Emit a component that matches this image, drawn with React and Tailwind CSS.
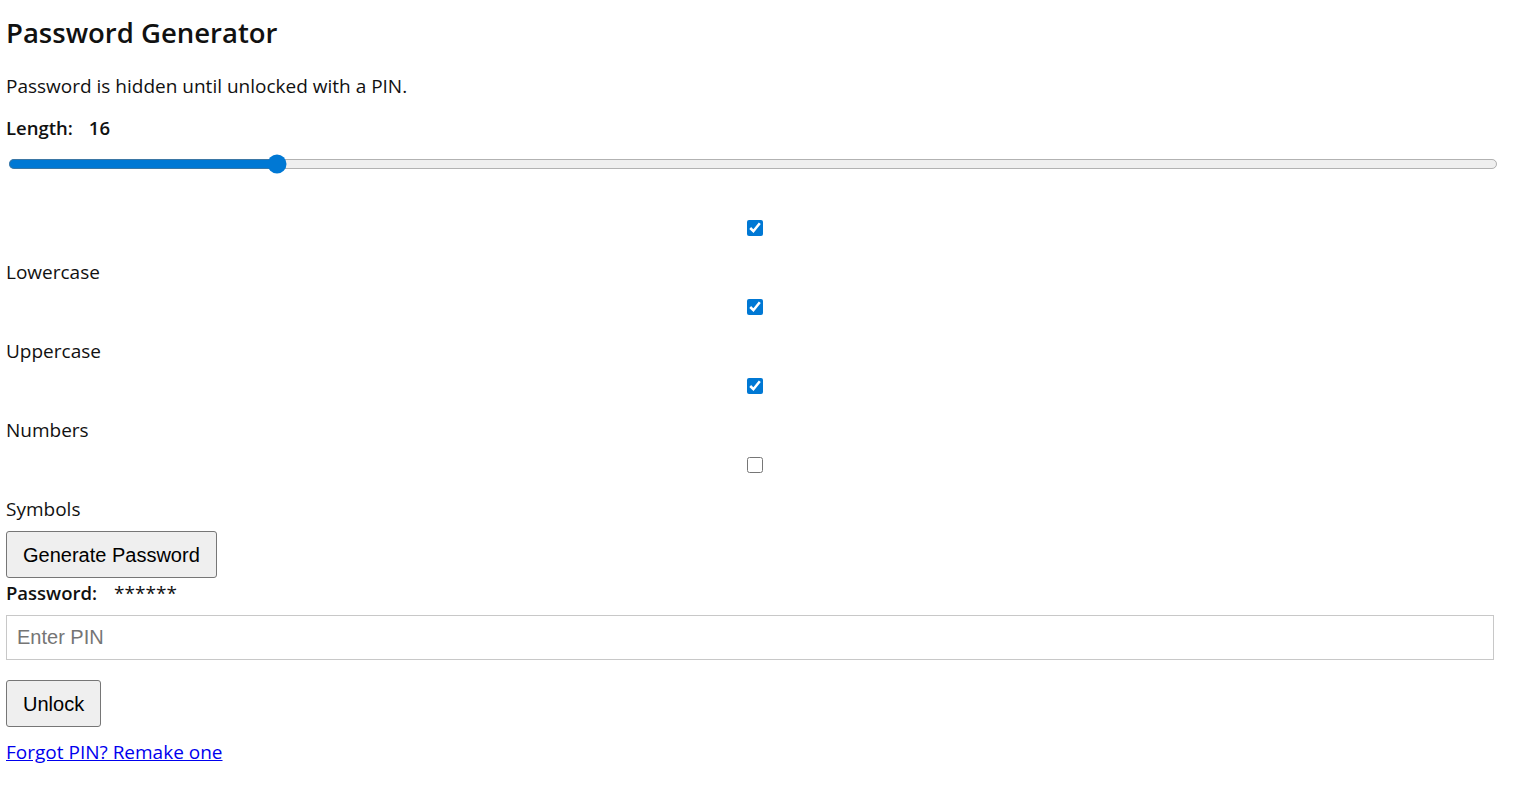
import { useState } from "react";

export default function App() {
    const [length, setLength] = useState(16);
    const [opts, setOpts] = useState({ Lowercase: true, Uppercase: true, Numbers: true, Symbols: false });
    const [pin, setPin] = useState("");

    const toggle = (k) => setOpts(prev => ({ ...prev, [k]: !prev[k] }));

    return (
        <div className="px-[6px] text-[19px] text-[#111] bg-white min-h-screen" style={{ fontFamily: '"Open Sans", sans-serif' }}>
            <h1 className="pt-[14px] text-[27.5px] leading-[38px] font-semibold">Password Generator</h1>
            <p className="mt-[22px] leading-[24px]">Password is hidden until unlocked with a PIN.</p>
            <div className="mt-[18px] leading-[24px] font-semibold text-[18.5px]">
                <span>Length:</span>
                <span className="ml-[16px]">{length}</span>
            </div>
            {/* slider drawn at 125% like the original */}
            <div className="mt-[14px] h-[20px] pl-[2px]">
                <input
                    type="range"
                    min="4"
                    max="72"
                    value={length}
                    onChange={e => setLength(Number(e.target.value))}
                    className="block w-[1192px] h-4 m-0 accent-[#0078d4] [zoom:1.25]"
                />
            </div>
            <div className="mt-[46px]">
                {Object.keys(opts).map((k, i) => (
                    <div key={k} className={i > 0 ? "mt-[15px]" : ""}>
                        <div className="flex justify-center pr-[4px]">
                            <input
                                type="checkbox"
                                checked={opts[k]}
                                onChange={() => toggle(k)}
                                className="block w-4 h-4 m-0 accent-[#0078d4]"
                            />
                        </div>
                        <label className="block mt-[24px] leading-[24px]">{k}</label>
                    </div>
                ))}
            </div>
            <button className="mt-[10px] block h-[47px] px-[16px] text-[20px] bg-[#efefef] border border-[#767676] rounded-[3px] text-black" style={{ fontFamily: '"Liberation Sans", Arial, sans-serif' }}>
                Generate Password
            </button>
            <div className="mt-[3px] leading-[24px]">
                <span className="font-semibold text-[18.5px]">Password:</span>
                <span className="ml-[17px]">******</span>
            </div>
            <input
                type="password"
                value={pin}
                onChange={e => setPin(e.target.value)}
                placeholder="Enter PIN"
                className="mt-[10px] block w-[1488px] h-[45px] px-[10px] text-[20px] border border-[#c8c8c8] placeholder:text-[#757575] outline-none"
                style={{ fontFamily: '"Liberation Sans", Arial, sans-serif' }}
            />
            <button className="mt-[20px] block h-[47px] px-[16px] text-[20px] bg-[#efefef] border border-[#767676] rounded-[3px] text-black" style={{ fontFamily: '"Liberation Sans", Arial, sans-serif' }}>
                Unlock
            </button>
            <a href="#" className="mt-[13px] inline-block leading-[24px] text-[#0000ee] underline">Forgot PIN? Remake one</a>
        </div>
    );
}
